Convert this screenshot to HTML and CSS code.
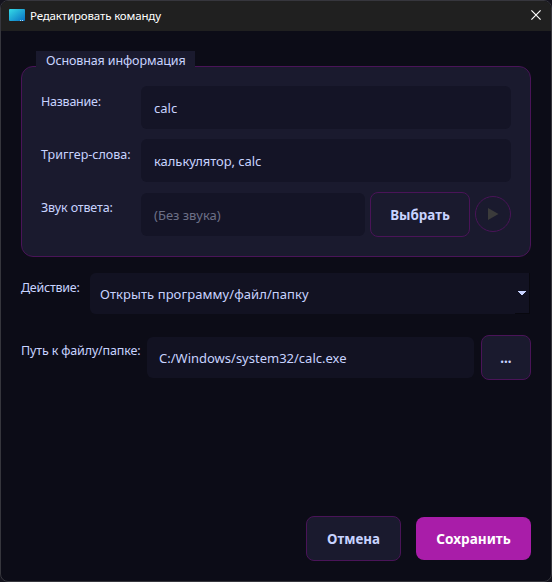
FILE: index.html
```html
<!DOCTYPE html>
<html lang="ru">
<head>
<meta charset="utf-8">
<title>Редактировать команду</title>
<link rel="stylesheet" href="styles.css">
</head>
<body>
<div class="window">
  <header class="titlebar">
    <svg class="app-icon" width="16" height="12" viewBox="0 0 16 12">
      <defs><linearGradient id="screen" x1="0" y1="0" x2="1" y2="1"><stop offset="0" stop-color="#35dbe6"/><stop offset="1" stop-color="#0870c4"/></linearGradient></defs>
      <rect width="16" height="12" rx="1" fill="url(#screen)"/>
      <path d="M11 11h1v1h-1zM13 11h1v1h-1z" fill="#a9dcf5"/>
    </svg>
    <h1 class="title">Редактировать команду</h1>
    <svg class="close" width="10" height="10" viewBox="0 0 10 10"><path d="M.4.4 9.6 9.6M9.6.4.4 9.6" stroke="#fff" stroke-width="1.15"/></svg>
  </header>
  <main class="content">
    <section class="group">
      <h2 class="legend">Основная информация</h2>
      <div class="row">
        <label class="label tight">Название:</label>
        <div class="field">calc</div>
      </div>
      <div class="row">
        <label class="label">Триггер-слова:</label>
        <div class="field words">калькулятор, calc</div>
      </div>
      <div class="row row-sound">
        <label class="label snug">Звук ответа:</label>
        <div class="field muted">(Без звука)</div>
        <button class="button choose">Выбрать</button>
        <button class="play"><svg width="12" height="12" viewBox="0 0 12 12"><path d="M1 0 11.5 6 1 12z" fill="#3b3b3b"/></svg></button>
      </div>
    </section>
    <div class="action">
      <label class="label tight">Действие:</label>
      <div class="combo">Открыть программу/файл/папку
        <span class="drop"><svg width="8" height="4" viewBox="0 0 8 4" shape-rendering="crispEdges"><path d="M0 0h8v1H0zM1 1h6v1H1zM2 2h4v1H2zM3 3h2v1H3z" fill="#c8d3ff"/></svg></span>
      </div>
    </div>
    <div class="path">
      <label class="label snug">Путь к файлу/папке:</label>
      <div class="field">C:/Windows/system32/calc.exe</div>
      <button class="button browse">...</button>
    </div>
    <footer class="footer">
      <button class="button cancel">Отмена</button>
      <button class="button save">Сохранить</button>
    </footer>
  </main>
</div>
</body>
</html>
```
FILE: styles.css
```css
* { box-sizing: border-box; }
body {
  margin: 0;
  background: #14131d;
  font-family: "Noto Sans", "Open Sans", sans-serif;
  font-size: 12.5px;
  line-height: 18px;
  color: #c8d3ff;
  white-space: nowrap;
}
button { font: inherit; color: inherit; padding: 0; }
svg { display: block; }
.window {
  width: 552px;
  height: 582px;
  border: 1px solid #36363d;
  border-radius: 8px;
  background: #0c0c17;
  overflow: hidden;
}
.titlebar {
  height: 30px;
  display: flex;
  align-items: center;
  padding: 0 10px 0 8px;
  background: #202020;
  color: #fff;
}
.app-icon { margin-bottom: 2px; }
.title {
  flex: 1;
  margin: 0 0 0 5px;
  font-size: 11.5px;
  font-weight: 400;
  letter-spacing: -0.15px;
}
.close { margin-bottom: 2px; }
.content { padding: 35px 20px 0; }
.group {
  height: 191px;
  padding: 0 19px;
  border: 1px solid #4a1458;
  border-radius: 12px;
  background: #1a1a2e;
}
.legend {
  width: 159px;
  height: 18px;
  margin: -16px 0 17px -5px;
  padding: 1px 0 0 10px;
  background: #1a1a2e;
  font-size: 12.5px;
  font-weight: 400;
  letter-spacing: -0.12px;
}
.row { display: flex; height: 43px; margin-bottom: 10px; }
.label { width: 100px; padding-top: 7px; flex: none; }
.tight { letter-spacing: -0.25px; }
.snug { letter-spacing: -0.15px; }
.field {
  flex: 1;
  height: 43px;
  display: flex;
  align-items: center;
  padding: 1px 13px 0;
  border-radius: 6px;
  background: #141426;
  font-size: 13px;
}
.words { letter-spacing: -0.05px; }
.muted { color: #6c7087; }
.row-sound { height: 45px; align-items: flex-start; }
.row-sound .field { margin-top: 1px; }
.button {
  height: 45px;
  border: 1px solid #4a1458;
  border-radius: 8px;
  background: #1a1a2e;
  font-size: 13.4px;
  font-weight: 700;
}
.choose { width: 100px; margin-left: 5px; }
.play {
  width: 36px;
  height: 36px;
  margin: 4px 0 0 5px;
  display: flex;
  align-items: center;
  justify-content: center;
  border: 1px solid #4a1458;
  border-radius: 50%;
  background: transparent;
}
.action { display: flex; margin-top: 16px; }
.action .label { width: 69px; padding-top: 6px; }
.combo {
  width: 440px;
  height: 41px;
  display: flex;
  align-items: center;
  justify-content: space-between;
  padding-left: 10px;
  border-radius: 6px 0 0 6px;
  background: linear-gradient(#121222, #121222) no-repeat 0 0 / 425px 41px;
  font-size: 13px;
  letter-spacing: 0.07px;
}
.drop {
  width: 15px;
  height: 41px;
  display: flex;
  align-items: center;
  justify-content: center;
  border: solid #08080f;
  border-width: 0 1px 1px 0;
  background: #121222;
}
.path { display: flex; margin-top: 21px; }
.path .label { width: 126px; }
.path .field { height: 41px; margin-top: 2px; padding: 1px 12px 0; background: #121222; }
.browse { width: 50px; margin-left: 7px; }
.footer { display: flex; justify-content: flex-end; align-items: center; gap: 15px; margin-top: 136px; }
.cancel { width: 95px; }
.save { width: 115px; height: 43px; border: 0; background: #a91da9; color: #fff; font-size: 13.6px; }
```
